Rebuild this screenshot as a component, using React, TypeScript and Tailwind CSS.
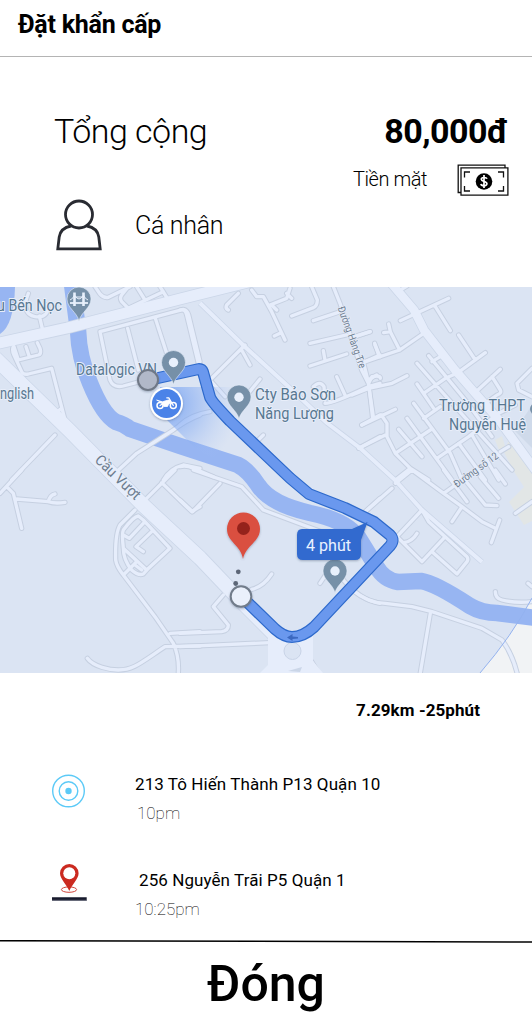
import React from "react";

type Tile = { x: number; y: number; roads: string[] };

// Minor streets, three units per pixel, grouped by map tile origin.
const tiles: Tile[] = [
  {
    x: 0,
    y: 280,
    roads: [
      "M85 40C70 75 75 105 105 110C135 115 150 95 140 75M118 108L128 150",
      "M285 20L300 42Q312 55 325 52L390 20",
      "M400 100L365 65Q358 55 365 45L385 20M385 85L490 35M410 20L435 60M480 20L505 60",
      "M420 305L370 318Q340 325 330 300L300 155L550 88Q562 90 566 105L600 245",
      "M383 145L415 270M465 112L500 220",
      "M40 200Q35 210 42 225L65 275Q70 285 85 282L155 265L195 420M165 400L185 385",
      "M42 200L55 240L115 225Q125 222 120 205L112 188M78 200L88 230",
      "M165 465L35 600",
      "M600 405Q560 420 520 450L410 520L350 575",
      "M490 600Q510 565 550 555L600 565",
    ],
  },
  {
    x: 180,
    y: 280,
    roads: [
      "M0 90Q15 85 20 105L55 250M175 40L140 75Q135 85 145 90",
      "M215 30L230 50L250 50L275 95L315 180M270 75L320 55L330 25M275 75L290 90M320 40L335 55M300 160L283 168",
      "M395 20L412 60Q412 78 400 83L335 108M400 122L475 97",
      "M460 20L480 70L545 270L565 310L580 410",
      "M390 190L500 165M390 258L500 222M430 212L435 240M525 170L570 155",
      "M195 195L90 300L135 350M185 210L210 255M240 297L205 340M250 465L230 485",
      "M0 435Q30 405 90 395M435 370Q460 370 565 320L600 310M470 290L495 345M400 320Q420 300 432 320L435 360",
      "M545 435L600 405M545 500L600 470M555 245L600 225M565 300L590 285M585 195L600 230",
      "M0 560Q20 555 40 565L100 590",
    ],
  },
  {
    x: 352,
    y: 280,
    roads: [
      "M145 122L290 55M250 80L295 152M95 158L115 155L110 132M115 155L143 210",
      "M215 160L143 210L40 245M68 190L80 225M0 172L55 155M320 165L370 240",
      "M400 218L315 280L280 295L215 340M35 250L50 310L62 415M50 310L60 290Q85 285 85 295",
      "M0 345L50 325L120 310L165 287M30 435L130 388",
      "M88 405L105 430L105 470L130 520L175 565L230 600M20 505L100 465",
      "M195 250L265 330L480 570M230 227L340 360L420 470M240 245L265 230M195 312L245 385",
      "M185 370L295 520L330 600M165 415L300 600M140 448L210 530M130 520L235 450M175 565L130 600",
      "M215 415L265 380M255 535L350 470L440 400L490 375M320 490L400 600M360 465L440 600",
      "M372 335L445 268M420 290L445 330Q450 340 435 345L400 370M540 265L495 310L500 330L540 350M445 515L470 500",
      "M150 27L165 18",
    ],
  },
  {
    x: 0,
    y: 470,
    roads: [
      "M0 70L65 0M20 50L40 70L65 175M50 87L145 95Q150 75 165 72M145 95Q165 102 195 97",
      "M440 85L525 0M485 38L575 125L600 110",
      "M405 120L360 165Q345 190 347 270Q350 290 370 315L465 440L520 520Q538 560 535 608",
      "M262 565C280 590 330 600 355 600C400 600 420 580 495 530L600 528M510 490L600 485",
      "M430 150L415 138Q400 140 370 180Q365 190 370 235L440 300L510 235L430 150",
      "M370 195L388 205L430 160M370 235Q370 270 395 300Q415 318 430 312L445 295M410 275L370 315M455 185L408 230L430 245M405 285L425 300",
    ],
  },
  {
    x: 180,
    y: 470,
    roads: [
      "M40 0L185 50L250 120L450 195M120 40L38 125L0 90",
      "M275 312Q250 350 215 358M130 375L100 410L145 465Q145 482 125 485L0 490M0 530L270 518",
      "M420 340L440 310M490 330Q540 390 600 400M550 130L600 85M395 575L415 608",
    ],
  },
  {
    x: 352,
    y: 470,
    roads: [
      "M40 125L120 55M130 40L180 0L275 70L330 110L390 155L430 175M443 150L418 218M330 110L300 155M275 70L310 45",
      "M275 0L345 95M330 20L400 105L435 107M385 20L440 85M430 0L460 42M490 130L540 95",
      "M210 120L135 200L210 275L275 205M155 218Q180 215 195 190M210 120L230 155L345 260Q350 268 345 275L315 312L240 245",
      "M0 360Q50 400 100 400L180 410L240 425L390 475L450 510Q480 550 495 608M235 430L205 608",
      "M430 365Q430 385 450 390Q490 400 540 395M528 340L540 350",
    ],
  },
];

function Streets({ stroke, width }: { stroke: string; width: number }) {
  return (
    <g fill="none" stroke={stroke} strokeWidth={width} strokeLinecap="round" strokeLinejoin="round">
      {tiles.map((t) => (
        <path
          key={`${t.x}-${t.y}`}
          transform={`translate(${t.x} ${t.y}) scale(0.33333)`}
          d={t.roads.join("")}
        />
      ))}
    </g>
  );
}

function Avenues({ stroke, extra }: { stroke: string; extra: number }) {
  return (
    <g fill="none" stroke={stroke} strokeLinejoin="round">
      <path strokeWidth={4 + extra} d="M200 303L243 345L290 388L327 423L360 448L395 480L422 510L482 562" />
      <path strokeWidth={11 + extra} d="M-5 344L67 328L180 299L260 279" />
      <path strokeWidth={8.5 + extra} d="M391 283L414 310L424 330L455 370L475 393L499 420L536 471" />
      <path strokeWidth={14 + extra} d="M-5 358L70 431L143 505L200 558L240 600L292 652" />
    </g>
  );
}

function Pin({ x, y }: { x: number; y: number }) {
  return (
    <g transform={`translate(${x} ${y})`}>
      <path d="M0 22C-2 13 -12 9 -12 0A12 12 0 0 1 12 0C12 9 2 13 0 22Z" fill="#7690a8" stroke="#e8eefa" strokeWidth="0.600" />
    </g>
  );
}

function RouteMap() {
  const route =
    "M149 380L199 369Q202 369 203 372L210 397Q211 401 230 421L290 478L309 494L345 508L374 522L390 535Q395 540 390 546L314 627Q303 637 292 637Q284 637 275 629L242 597";
  return (
    <svg viewBox="0 287 532 386" className="block h-[386px] w-full shrink-0 overflow-hidden">
      <defs>
        <radialGradient id="beam" gradientUnits="userSpaceOnUse" cx="167" cy="404" r="72">
          <stop offset="0" stopColor="#5f93f2" stopOpacity="0.75" />
          <stop offset="0.5" stopColor="#7fa8f3" stopOpacity="0.4" />
          <stop offset="1" stopColor="#a9c3f5" stopOpacity="0" />
        </radialGradient>
        <filter id="soft" x="-30%" y="-30%" width="160%" height="160%">
          <feDropShadow dx="0" dy="1" stdDeviation="1.2" floodColor="#3c4d6b" floodOpacity="0.4" />
        </filter>
      </defs>
      <rect x="0" y="287" width="532" height="386" fill="#dbe4f3" />
      <path d="M532 598Q512 636 480 673H532Z" fill="#f1f3f5" />
      <path d="M512 432L532 462V521L524 525L509 502L524 487L513 470L504 452Z" fill="#e2e6e6" />
      <path d="M495 440L502 436L505 446L499 450Z" fill="#e2e6e6" />
      <path d="M515 431L532 405V448Z" fill="#cfdaea" />
      <g fill="none" stroke="#97b5f2">
        <path
          strokeWidth="16.500"
          d="M72 284L78 330Q79 358 90 383Q103 415 116 422Q124 424 130 429L180 446L238 465Q248 470 258 485Q270 504 310 513Q345 520 358 537L376 566Q384 580 398 582L421 581Q435 583 470 606Q482 613 497 613L536 618"
        />
      </g>
      <path d="M0 287H15Q14 325 0 334Z" fill="#97b5f2" />
      <Streets stroke="#c6d0e1" width={16} />
      <Avenues stroke="#cbd6e8" extra={1.6} />
      <path d="M268 636L313 636V661L323 673H260L268 665Z" fill="#e6edfb" />
      <Streets stroke="#e6edfb" width={10} />
      <Avenues stroke="#e6edfb" extra={0} />
      <circle cx="292.500" cy="651" r="8.500" fill="#dbe4f3" stroke="#c9d4e7" />
      <path d="M288 671L302 667L300 672Z" fill="#cbd6e8" />
      <path d="M532 598Q512 636 480 673" fill="none" stroke="#93b2ef" strokeWidth="1" />
      <path d="M160 387H230L245 422L225 465L196 449L160 413Z" fill="url(#beam)" />

      <g fill="none" strokeLinejoin="round" strokeLinecap="butt">
        <path d={route} stroke="#2d69cb" strokeWidth="12" />
        <path d={route} stroke="#6a98ee" strokeWidth="9.600" />
      </g>
      <path d="M287 637.500L292.500 634V636.500L298 637V638.500L292.500 639V641Z" fill="#3c69c0" />

      <g
        fontFamily="Roboto, sans-serif"
        fill="#587891"
        stroke="#e8eefa"
        strokeWidth="2"
        strokeLinejoin="round"
        paintOrder="stroke"
        fontSize="16"
      >
        <text x="-3" y="311" textLength="65" lengthAdjust="spacingAndGlyphs">u Bến Nọc</text>
        <text x="76" y="375" textLength="81" lengthAdjust="spacingAndGlyphs">Datalogic VN</text>
        <text x="0" y="398.500" textLength="34" lengthAdjust="spacingAndGlyphs">nglish</text>
        <text x="255" y="400" textLength="81" lengthAdjust="spacingAndGlyphs">Cty Bảo Sơn</text>
        <text x="255" y="418.500" textLength="79" lengthAdjust="spacingAndGlyphs">Năng Lượng</text>
        <text x="439" y="411" textLength="86" lengthAdjust="spacingAndGlyphs">Trường THPT</text>
        <text x="449" y="430" textLength="77" lengthAdjust="spacingAndGlyphs">Nguyễn Huệ</text>
        <g fill="#6c7c8f" strokeWidth="1.500">
          <text transform="translate(94 461) rotate(44)" fontSize="15" textLength="57" lengthAdjust="spacingAndGlyphs">Cầu Vượt</text>
          <text transform="translate(337.500 308) rotate(70)" fontSize="10.500" textLength="65" lengthAdjust="spacingAndGlyphs">Đường Hàng Tre</text>
          <text transform="translate(457 488) rotate(-36)" fontSize="10.500" textLength="52" lengthAdjust="spacingAndGlyphs">Đường số 12</text>
        </g>
      </g>

      <Pin x={79} y={299} />
      <g stroke="#e8f0fc" fill="none">
        <path d="M74.500 292.500V306M83.500 292.500V306" strokeWidth="2.600" />
        <path d="M70 303H88" strokeWidth="1.800" />
        <path d="M70 300Q73 299 74.500 295Q79 303 83.500 295Q85 299 88 300M74 297H84" strokeWidth="1" />
      </g>
      <Pin x={173.500} y={362.500} />
      <circle cx="173.500" cy="362.500" r="4.700" fill="#e8f0fc" />
      <Pin x={239} y={397} />
      <circle cx="239" cy="397.300" r="4.700" fill="#e8f0fc" />
      <Pin x={335} y={571} />
      <circle cx="335" cy="571" r="4.700" fill="#e8f0fc" />
      <circle cx="536" cy="409" r="6" fill="#7690a8" />

      <circle cx="148" cy="380" r="10" fill="#b1b8c8" stroke="#6f7886" strokeWidth="2" filter="url(#soft)" />
      <circle cx="166.500" cy="403.500" r="16.500" fill="#fff" filter="url(#soft)" />
      <circle cx="166.500" cy="403.500" r="14.500" fill="#4b83e8" />
      <g fill="none" stroke="#fff" strokeWidth="1.500" strokeLinecap="round" strokeLinejoin="round">
        <circle cx="160" cy="405.500" r="3" />
        <circle cx="173.300" cy="405.500" r="3" />
        <path d="M173.300 405.500L168.800 397.800H166.800M160 405.500L163 403.500" strokeWidth="1.300" />
        <path d="M157 400.200L162.500 401.800L165.500 400.800L169.500 399.800L171 402.200L168.500 404.500L167.500 406.500H163.800L162.500 403Z" fill="#fff" strokeWidth="0.800" />
      </g>

      <path d="M243 559C241 545 227 542 227 529A16.500 16.500 0 0 1 260 529C260 542 246 545 243 559Z" fill="#da5040" filter="url(#soft)" />
      <circle cx="243.500" cy="528.500" r="6.500" fill="#95221b" />
      <circle cx="238.300" cy="571.800" r="2.400" fill="#5c6677" />
      <circle cx="235.700" cy="583.500" r="2.400" fill="#5c6677" />
      <circle cx="241" cy="596.500" r="10.300" fill="#eaf0fb" stroke="#717b8a" strokeWidth="2" filter="url(#soft)" />

      <path
        d="M302 529H352L367.500 522L361 540V554Q361 560 355 560H303Q297 560 297 554V535Q297 529 302 529Z"
        fill="#306bcf"
        filter="url(#soft)"
      />
      <text x="306" y="551" fontFamily="Roboto, sans-serif" fontSize="17" fill="#eaf2ff" textLength="45" lengthAdjust="spacingAndGlyphs">
        4 phút
      </text>
    </svg>
  );
}

function PersonIcon() {
  return (
    <svg viewBox="0 0 46 52" className="h-[52px] w-[46px] shrink-0" fill="none" stroke="#292b32" strokeWidth="2.800">
      <circle cx="23" cy="15.500" r="13.500" />
      <path d="M15 27C7 28.500 4 33 3.200 38L1.800 49.800H44.200L42.800 38C42 33 39 28.500 31 27" />
    </svg>
  );
}

function CashIcon() {
  return (
    <svg viewBox="0 0 52 32" className="h-8 w-[52px] shrink-0" fill="none" stroke="#111" strokeWidth="1.300">
      <path d="M4 28.500H1.200V1.200H48V4" />
      <path d="M4 3.900H50.900V31.100H4Z" />
      <path d="M7.500 13.500V8H13M41 8H46.500V13.500M7.500 22V27H13M41 27H46.500V22" />
      <circle cx="27" cy="17.500" r="8.300" fill="#000" stroke="none" />
      <path d="M30 14.800C29.500 13.200 24.300 12.800 24.300 15.200C24.300 17.800 29.900 16.900 29.900 19.800C29.900 22.400 24.300 22.100 23.900 20M27 11V24" stroke="#fff" strokeWidth="1.700" />
    </svg>
  );
}

function TargetIcon() {
  return (
    <svg viewBox="0 0 34 34" className="h-[34px] w-[34px]" fill="none" stroke="#5ccaf7" strokeWidth="1.400">
      <circle cx="16.500" cy="17" r="15.800" />
      <circle cx="16.500" cy="17" r="9.300" />
      <circle cx="16.500" cy="17" r="3.200" fill="#5ccaf7" stroke="none" />
    </svg>
  );
}

function DestinationIcon() {
  return (
    <svg viewBox="0 0 36 38" className="h-[38px] w-9">
      <ellipse cx="17" cy="26.600" rx="7.600" ry="2.700" fill="none" stroke="#d0463d" strokeWidth="1" />
      <path d="M17.300 28C15 22 8 16 8 10.300A9.300 9.300 0 0 1 26.600 10.300C26.600 16 19.600 22 17.300 28Z" fill="#cb2a20" />
      <circle cx="17.300" cy="10.300" r="6" fill="#fff" />
      <path d="M0 34.200H34.700V37.700H0Z" fill="#171a2c" />
      <path d="M0 37.300H34.700" stroke="#777b8c" strokeWidth="0.800" />
    </svg>
  );
}

export default function App() {
  return (
    <div className="flex h-[1024px] w-[532px] flex-col overflow-hidden bg-white text-black [font-family:Roboto,sans-serif]">
      <header className="h-[57px] shrink-0 border-b border-[#b4b4b4] pt-[9px] pl-[18px]">
        <h1 className="text-[25px] leading-8 font-bold tracking-[-0.25px]">Đặt khẩn cấp</h1>
      </header>

      <section className="h-[230px] shrink-0 pt-[54px] pr-6 pl-[54px]">
        <div className="flex justify-between leading-10">
          <h2 className="text-[34px] font-light tracking-[-0.5px]">Tổng cộng</h2>
          <strong className="text-[34px] font-bold tracking-[-0.5px]">80,000đ</strong>
        </div>
        <div className="mt-[13px] -mr-px flex h-8 items-center justify-end gap-[30px]">
          <span className="-mt-0.5 text-[20px] font-light tracking-[-0.45px]">Tiền mặt</span>
          <CashIcon />
        </div>
        <div className="mt-[3px] ml-0.5 flex h-[52px] items-center gap-[33px]">
          <PersonIcon />
          <span className="pt-0.5 text-[25px] font-light tracking-[-0.3px]">Cá nhân</span>
        </div>
      </section>

      <RouteMap />

      <section className="flex h-[267px] shrink-0 flex-col pt-[25px] text-[17px] leading-6">
        <p className="mr-[52px] text-right font-bold tracking-[0.08px]">7.29km -25phút</p>
        <div className="mt-[50px] flex h-24 pl-[52px]">
          <div className="w-[83px] shrink-0 pt-0.5">
            <TargetIcon />
          </div>
          <div>
            <p className="tracking-[0.08px]">213 Tô Hiến Thành P13 Quận 10</p>
            <p className="mt-[5px] pl-0.5 font-thin">10pm</p>
          </div>
        </div>
        <div className="flex pl-[52px]">
          <div className="-mt-[5px] w-[83px] shrink-0">
            <DestinationIcon />
          </div>
          <div>
            <p className="pl-1 tracking-[0.08px]">256 Nguyễn Trãi P5 Quận 1</p>
            <p className="mt-[5px] font-thin">10:25pm</p>
          </div>
        </div>
      </section>

      <footer className="flex flex-1 flex-col">
        <svg viewBox="0 0 532 3" className="block h-[3px] w-full shrink-0">
          <path d="M0 .7L532 2.100" stroke="#000" strokeWidth="1.500" />
        </svg>
        <button className="flex-1 text-[50px] leading-none font-medium">Đóng</button>
      </footer>
    </div>
  );
}
